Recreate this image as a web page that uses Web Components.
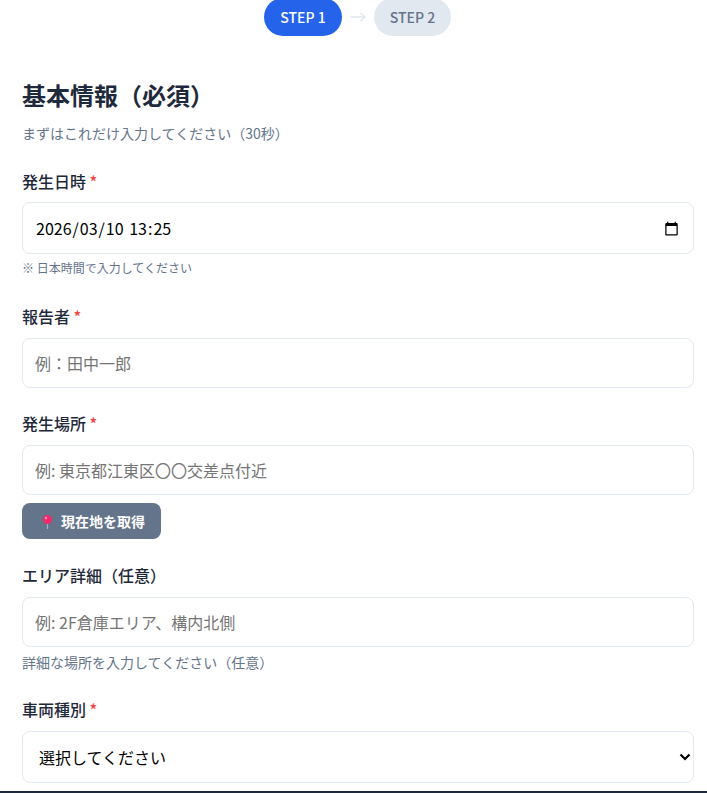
<!DOCTYPE html>
<html lang="ja"><head><meta charset="utf-8">
<style>
html,body{margin:0;padding:0;background:#fff;height:793px;overflow:hidden}
body{font-family:"Noto Sans CJK JP","Noto Sans",sans-serif;display:flex;flex-direction:column}
report-form{flex:1;min-height:0}
</style></head><body>
<report-form>
  <step-bar slot="steps"></step-bar>
  <section-head title="基本情報（必須）" sub="まずはこれだけ入力してください（30秒）"></section-head>
  <form-field label="発生日時" label-gap="9" required hint="※ 日本時間で入力してください" hint-size="12" hint-top="4" gap="26">
    <date-box></date-box>
  </form-field>
  <form-field label="報告者" required gap="23">
    <text-box placeholder="例：田中一郎"></text-box>
  </form-field>
  <form-field label="発生場所" required gap="24">
    <text-box placeholder="例: 東京都江東区〇〇交差点付近"></text-box>
    <location-button>現在地を取得</location-button>
  </form-field>
  <form-field label="エリア詳細（任意）" hint="詳細な場所を入力してください（任意）" hint-size="14" hint-top="5" gap="25">
    <text-box placeholder="例: 2F倉庫エリア、構内北側"></text-box>
  </form-field>
  <form-field label="車両種別" required gap="0">
    <select-box value="選択してください"></select-box>
  </form-field>
</report-form>
<script>
function def(name, css, html){
  customElements.define(name, class extends HTMLElement{
    connectedCallback(){
      if(this.shadowRoot) return;
      const r=this.attachShadow({mode:'open'});
      r.innerHTML='<style>'+css+'</style>'+(typeof html==='function'?html(this):html);
    }
  });
}
const boxCss=`:host{display:block}
  .b{box-sizing:border-box;display:flex;align-items:center;height:50px;border:1px solid #e2e8f0;border-radius:8px;background:#fff;padding:0 12px;font-size:16px;color:#000}`;
def('report-form',
 `:host{display:block;box-sizing:border-box;height:100%;border-bottom:2px solid #1e293b;overflow:hidden;background:#fff}
  .in{padding:0 13px 0 22px;margin-top:-2px}`,
 `<div class="in"><slot name="steps"></slot><slot></slot></div>`);
def('step-bar',
 `:host{display:flex;justify-content:center;align-items:center;gap:8px;height:38px;margin:0 1px 41px 0;font-size:14px;font-weight:500;line-height:20px}
  .p{box-sizing:border-box;height:38px;width:78px;border-radius:19px;display:flex;align-items:center;justify-content:center;background:#2563eb;color:#fff}
  .o{background:#e2e8f0;color:#64748b;width:77px}
  svg{display:block;width:16px;height:12px}`,
 `<div class="p">STEP 1</div><svg viewBox="0 0 16 12"><path d="M0.5 6H15M10.5 2L15 6L10.5 10" fill="none" stroke="#e2e8f0" stroke-width="1.5"/></svg><div class="p o">STEP 2</div>`);
def('section-head',
 `:host{display:block;margin-bottom:26px}
  h2{margin:0 0 10px;font-size:24px;line-height:36px;font-weight:700;color:#1e293b}
  p{margin:0;font-size:14px;line-height:20px;color:#64748b}`,
 h=>`<h2>${h.getAttribute('title')}</h2><p>${h.getAttribute('sub')}</p>`);
def('form-field',
 `:host{display:block}
  label{display:block;font-size:16px;line-height:24px;font-weight:500;color:#1e293b}
  i{font-style:normal;color:#ef4444}
  .h{color:#64748b}`,
 h=>`<label style="margin-bottom:${h.getAttribute('label-gap')||10}px">${h.getAttribute('label')}${h.hasAttribute('required')?' <i>*</i>':''}</label><slot></slot>`+
    (h.getAttribute('hint')?`<div class="h" style="margin-top:${h.getAttribute('hint-top')}px;font-size:${h.getAttribute('hint-size')}px;line-height:20px">${h.getAttribute('hint')}</div>`:'')+
    `<div style="height:${h.getAttribute('gap')}px"></div>`);
def('text-box',
 boxCss+`input{flex:1;min-width:0;border:0;outline:0;padding:0;margin:0;background:transparent;font:inherit;color:#000}
  input::placeholder{color:#757575;opacity:1}`,
 h=>`<div class="b"><input type="text" placeholder="${h.getAttribute('placeholder')||''}"></div>`);
def('date-box',
 boxCss+`.b{height:52px;justify-content:space-between}
  s{text-decoration:none;padding:0 1px}
  svg{display:block;width:15px;height:15px;margin-right:2px}`,
 `<div class="b"><span class="v"><s>2026</s>/<s>03</s>/<s>10</s> <s>13</s>:<s>25</s></span><svg viewBox="0 0 24 24"><path d="M20 3h-1V1h-2v2H7V1H5v2H4c-1.1 0-2 .9-2 2v16c0 1.100.9 2 2 2h16c1.100 0 2-.9 2-2V5c0-1.100-.9-2-2-2zm0 18H4V8h16v13z"/></svg></div>`);
def('location-button',
 `:host{display:flex;box-sizing:border-box;height:36px;width:139px;margin-top:8px;padding-left:16px;align-items:center;gap:4px;background:#64748b;color:#fff;border-radius:8px;font-size:14px;font-weight:700;line-height:20px}
  svg{display:block;width:19px;height:16px}`,
 `<svg viewBox="0 0 19 16"><path d="M9.500 9V16" stroke="#a7afba" stroke-width="1.200"/><circle cx="9.500" cy="6.500" r="4.500" fill="#ef2a68"/><circle cx="8" cy="5" r="1.200" fill="#f78fb0"/></svg><slot></slot>`);
def('select-box',
 `:host{display:block}
  .b{box-sizing:border-box;display:flex;align-items:center;justify-content:space-between;height:52px;border:1px solid #e2e8f0;border-radius:8px;background:#fff;padding:0 0 0 16px;font-size:16px;color:#000}
  svg{display:block;width:12px;height:8px;margin-right:2px}`,
 h=>`<div class="b"><span>${h.getAttribute('value')}</span><svg viewBox="0 0 12 8"><path d="M1.500 1.500L6 6L10.500 1.500" fill="none" stroke="#000" stroke-width="2.200"/></svg></div>`);
</script>
</body></html>
